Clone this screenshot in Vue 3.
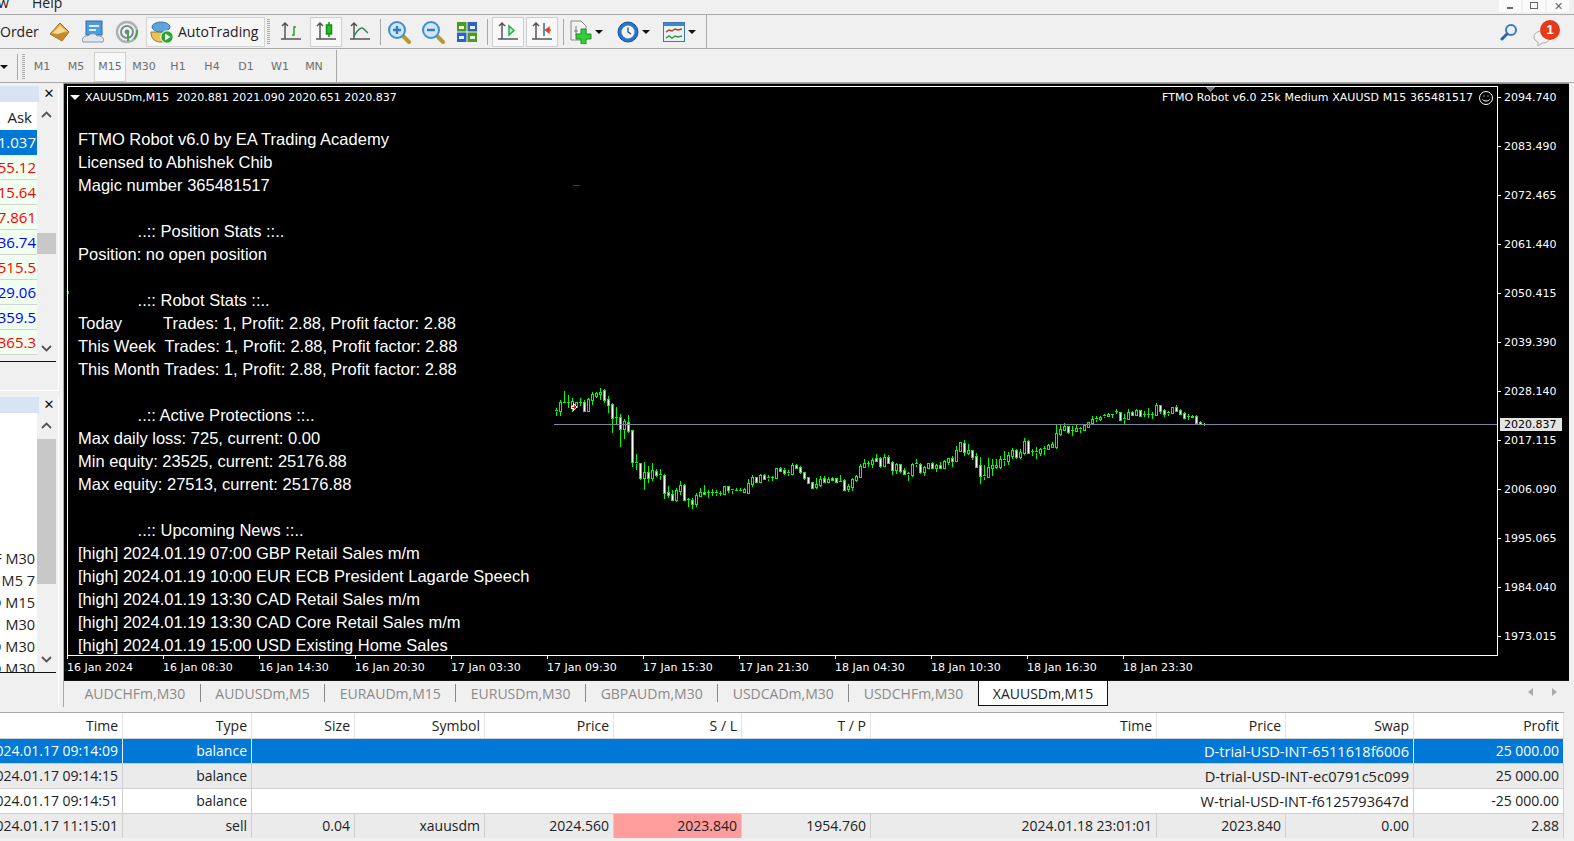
<script setup>
const periods = ['M1', 'M5', 'M15', 'M30', 'H1', 'H4', 'D1', 'W1', 'MN']

const quotes = [
  { text: '1.037', color: '#fff', active: true },
  { text: '55.12', color: '#f00' },
  { text: '15.64', color: '#f00' },
  { text: '7.861', color: '#f00' },
  { text: '36.74', color: '#00f' },
  { text: '515.5', color: '#f00' },
  { text: '29.06', color: '#00f' },
  { text: '359.5', color: '#00f' },
  { text: '365.3', color: '#f00' },
]

const navItems = ['F M30', 'D M5 7', 'D M15', 'M30', 'D M30', 'D M30']

const indent = '             '

const overlay = [
  'FTMO Robot v6.0 by EA Trading Academy',
  'Licensed to Abhishek Chib',
  'Magic number 365481517',
  '',
  indent + '..:: Position Stats ::..',
  'Position: no open position',
  '',
  indent + '..:: Robot Stats ::..',
  'Today         Trades: 1, Profit: 2.88, Profit factor: 2.88',
  'This Week  Trades: 1, Profit: 2.88, Profit factor: 2.88',
  'This Month Trades: 1, Profit: 2.88, Profit factor: 2.88',
  '',
  indent + '..:: Active Protections ::..',
  'Max daily loss: 725, current: 0.00',
  'Min equity: 23525, current: 25176.88',
  'Max equity: 27513, current: 25176.88',
  '',
  indent + '..:: Upcoming News ::..',
  '[high] 2024.01.19 07:00 GBP Retail Sales m/m',
  '[high] 2024.01.19 10:00 EUR ECB President Lagarde Speech',
  '[high] 2024.01.19 13:30 CAD Retail Sales m/m',
  '[high] 2024.01.19 13:30 CAD Core Retail Sales m/m',
  '[high] 2024.01.19 15:00 USD Existing Home Sales',
]

const symbolLine = 'XAUUSDm,M15  2020.881 2021.090 2020.651 2020.837'

const priceLabels = [
  ['2094.740', 97], ['2083.490', 146], ['2072.465', 195], ['2061.440', 244],
  ['2050.415', 293], ['2039.390', 342], ['2028.140', 391], ['2017.115', 440],
  ['2006.090', 489], ['1995.065', 538], ['1984.040', 587], ['1973.015', 636],
]

const timeLabels = [
  '16 Jan 2024', '16 Jan 08:30', '16 Jan 14:30', '16 Jan 20:30', '17 Jan 03:30', '17 Jan 09:30',
  '17 Jan 15:30', '17 Jan 21:30', '18 Jan 04:30', '18 Jan 10:30', '18 Jan 16:30', '18 Jan 23:30',
]

const tabs = ['AUDCHFm,M30', 'AUDUSDm,M5', 'EURAUDm,M15', 'EURUSDm,M30', 'GBPAUDm,M30', 'USDCADm,M30', 'USDCHFm,M30', 'XAUUSDm,M15']

const headers = ['Time', 'Type', 'Size', 'Symbol', 'Price', 'S / L', 'T / P', 'Time', 'Price', 'Swap', 'Profit']

const balanceRows = [
  { time: '2024.01.17 09:14:09', comment: 'D-trial-USD-INT-6511618f6006', profit: '25 000.00', cls: 'selected' },
  { time: '2024.01.17 09:14:15', comment: 'D-trial-USD-INT-ec0791c5c099', profit: '25 000.00', cls: 'odd' },
  { time: '2024.01.17 09:14:51', comment: 'W-trial-USD-INT-f6125793647d', profit: '-25 000.00', cls: '' },
]
const tradeRow = ['2024.01.17 11:15:01', 'sell', '0.04', 'xauusdm', '2024.560', '2023.840', '1954.760', '2024.01.18 23:01:01', '2023.840', '0.00', '2.88']

// high, body top, body bottom, low in zoomed pixels, kind: w filled, o hollow, t flat
const seriesA = `115,120,126,138,t 90,97,124,138,o 63,95,98,100,t 75,95,100,115,t 85,92,105,125,o 95,97,110,115,o 85,95,100,108,t 90,97,122,125,w 85,88,122,126,o 67,73,90,105,o 65,70,78,85,o 55,65,72,90,o 58,61,89,99,w 78,88,104,128,w 98,103,143,188,w 110,141,143,165,t 132,142,176,230,w 148,154,176,207,o 135,155,182,190,w 180,181,277,290,w 252,276,282,300,t 278,280,323,330,w 276,307,323,360,o 288,307,323,338,w 279,301,323,332,o 298,304,315,322,w 297,312,317,330,t 313,316,368,386,w 348,367,375,385,w 360,373,391,393,w 353,361,389,396,o 333,346,362,376,o 342,345,391,392,w 383,388,391,410,t 385,391,401,417,w 368,376,401,410,o 354,367,378,382,o 345,366,371,372,w 360,366,369,384,t 358,365,369,378,t 360,365,372,378,t 364,368,373,378,t 348,349,372,374,o 348,349,360,370,w 358,358,362,372,t 354,360,365,367,t 354,360,365,367,t 355,357,365,367,o 328,340,368,369,o 315,322,341,350,o 320,322,336,340,w 313,315,337,338,o 312,316,327,330,w 316,321,326,332,t 318,320,322,333,t 294,295,323,324,o 290,294,303,306,w 295,301,309,316,w 300,306,311,318,t 280,285,311,312,o 283,286,293,296,w 288,292,307,312,w 306,307,324,330,w 320,322,339,342,w 335,337,353,358,w 325,343,350,358,o 318,328,344,350,o 318,324,336,340,w 322,327,335,338,o 322,325,330,333,w 324,325,335,336,w 316,334,335,336,t 328,331,359,360,w 342,349,358,366,o 323,327,350,362,o 316,317,330,336,o 282,289,320,322,o 268,280,290,294,o 274,279,283,290,t 264,271,281,293,o 252,264,273,277,w`
const seriesB = `232,235,258,263,w 222,232,257,262,o 226,232,249,252,w 243,246,269,285,w 250,252,270,282,o 252,253,272,278,w 265,271,282,285,w 275,280,284,303,t 248,252,285,291,o 237,250,256,262,t 250,251,275,281,w 258,262,275,288,o 249,250,263,265,o 247,250,263,265,w 253,255,263,277,o 247,256,263,266,w 240,243,263,265,o 234,235,246,255,o 228,234,242,260,w 198,210,242,243,o 186,187,212,213,o 181,190,217,228,w 192,209,218,224,o 210,211,230,240,w 220,229,260,265,w 232,256,287,312,w 255,286,291,300,t 235,262,290,291,o 236,256,263,288,o 236,255,262,268,o 228,237,262,267,o 213,238,242,258,t 215,225,243,254,o 203,211,229,237,o 208,211,231,236,w 206,217,231,238,o 175,183,219,225,o 180,183,219,220,w 208,212,215,228,t 202,214,218,237,t 204,208,218,228,o 198,204,210,225,t 192,194,207,209,o 187,192,200,204,o 135,160,200,207,o 132,148,162,168,o 128,139,150,154,o 138,139,156,162,w 138,151,154,167,t 136,144,153,156,o 141,145,149,159,t 135,136,149,150,o 127,127,140,142,o 109,118,129,130,o 109,114,120,125,t 108,110,116,122,o 102,106,110,114,t 99,102,108,110,o 103,103,105,114,t 87,94,97,102,t 96,97,119,121,w 103,115,119,132,t 88,97,116,117,o 93,97,104,108,w 88,91,105,107,o 90,91,108,110,w 92,103,106,111,t 84,102,104,114,t 95,103,105,117,t 70,76,105,106,o 75,76,93,102,w 88,91,101,110,w 94,97,102,107,t 80,82,99,100,o 76,82,92,96,w 87,91,102,104,w 97,99,113,116,w 102,107,111,120,t 106,107,110,114,w 106,107,129,130,w 124,125,133,135,w 129,133,134,138,t`

const parseSeries = (raw, x0, y0) =>
  raw.split(' ').map((item, i) => {
    const p = item.split(',')
    const ys = p.slice(0, 4).map((v) => Math.round(y0 + Number(v) / 3))
    return {
      x: x0 + i * 4,
      high: ys[0],
      top: ys[1],
      bottom: Math.max(ys[2], ys[1] + 1),
      low: ys[3],
      kind: p[4],
    }
  })

const candles = [...parseSeries(seriesA, 556, 370), ...parseSeries(seriesB, 880, 380)]
</script>

<template>
  <div class="terminal">
    <div class="menubar">
      <span class="menu-item first">w</span>
      <span class="menu-item">Help</span>
      <div class="window-btns">
        <span class="win-btn"><i class="win-min"></i></span>
        <span class="win-btn"><i class="win-restore"></i></span>
        <span class="win-btn close">✕</span>
      </div>
    </div>

    <div class="toolbar main-bar">
      <div class="tool-group">
        <span class="order-label">Order</span>
        <span class="tool w34">
          <svg width="24" height="22" viewBox="0 0 24 22">
            <path d="M3 13 13 2l9 9-7 9z" fill="#e3b04a" stroke="#94691c" />
            <path d="M3 13l12 7 7-9-9 1z" fill="#c48a2a" />
            <path d="M6 12l7-7 6 5-8 3z" fill="#f6dc97" />
          </svg>
        </span>
        <span class="tool w34">
          <svg width="24" height="24" viewBox="0 0 24 24">
            <rect x="5" y="1" width="16" height="14" fill="#4f9bdc" stroke="#2a6cae" />
            <rect x="8" y="5" width="10" height="2" fill="#dcecf9" />
            <rect x="8" y="9" width="7" height="2" fill="#dcecf9" />
            <path d="M2 22c-2-4 2-7 5-6 2-3 8-3 9 0 4-1 8 2 6 6z" fill="#dfe6ee" stroke="#8a97a8" />
          </svg>
        </span>
        <span class="tool w34">
          <svg width="24" height="24" viewBox="0 0 24 24" fill="none">
            <circle cx="12" cy="12" r="10" stroke="#aab2b5" stroke-width="2.400" />
            <circle cx="12" cy="12" r="6" stroke="#7f8a8d" stroke-width="2" />
            <circle cx="12" cy="12" r="2.400" fill="#5f8f7a" />
            <path d="M19 19c3-3 3-7 3-9" stroke="#4ca05a" stroke-width="2" />
            <path d="M13 12v9" stroke="#4ca05a" stroke-width="2" />
          </svg>
        </span>
        <div class="autotrading">
          <svg width="24" height="24" viewBox="0 0 24 24">
            <path d="M1 12c0 6 3 10 10 10s9-4 9-10z" fill="#eac25a" stroke="#9a7b2a" />
            <ellipse cx="11" cy="7" rx="9" ry="5" fill="#5da5d8" stroke="#3679ad" />
            <circle cx="17" cy="17" r="6.200" fill="#2aa52e" stroke="#fff" />
            <path d="M15 13.500v7l5.500-3.500z" fill="#fff" />
          </svg>
          <span>AutoTrading</span>
        </div>
      </div>

      <i class="grip first-grip"></i>

      <span class="tool w34">
        <svg width="24" height="22" viewBox="0 0 24 22" fill="none" stroke="#555" stroke-width="1.500">
          <path d="M6 2v16M2 18h20M3 5l3-3 3 3" />
          <path d="M13 14h2V6h2" stroke="#2ca02c" />
        </svg>
      </span>
      <span class="tool boxed candle-btn">
        <svg width="24" height="22" viewBox="0 0 24 22" fill="none" stroke="#555" stroke-width="1.500">
          <path d="M6 2v16M2 18h20M3 5l3-3 3 3" />
          <path d="M15 1v15" stroke="#1a8a1a" />
          <rect x="12.500" y="4" width="5" height="9" fill="#22c022" stroke="#1a8a1a" />
        </svg>
      </span>
      <span class="tool w34">
        <svg width="24" height="22" viewBox="0 0 24 22" fill="none" stroke="#555" stroke-width="1.500">
          <path d="M6 2v16M2 18h20M3 5l3-3 3 3" />
          <path d="M6 15c3-5 5-8 8-8 2 0 3 3 6 5" stroke="#2c8a5c" />
        </svg>
      </span>
      <i class="sep"></i>
      <span class="tool w34 zoom-in">
        <svg width="24" height="24" viewBox="0 0 24 24">
          <path d="M15 15l7 7" stroke="#b79a34" stroke-width="4" stroke-linecap="round" />
          <circle cx="10" cy="10" r="8" fill="#cfe6f7" stroke="#3f8fd0" stroke-width="2" />
          <path d="M6 10h8M10 6v8" stroke="#2e7fc2" stroke-width="2.400" />
        </svg>
      </span>
      <span class="tool w34">
        <svg width="24" height="24" viewBox="0 0 24 24">
          <path d="M15 15l7 7" stroke="#b79a34" stroke-width="4" stroke-linecap="round" />
          <circle cx="10" cy="10" r="8" fill="#cfe6f7" stroke="#3f8fd0" stroke-width="2" />
          <path d="M6 10h8" stroke="#2e7fc2" stroke-width="2.400" />
        </svg>
      </span>
      <span class="tool w34">
        <svg width="22" height="22" viewBox="0 0 22 22">
          <rect x="1" y="1" width="9.500" height="9.500" fill="#4c9a1e" />
          <rect x="11.500" y="1" width="9.500" height="9.500" fill="#2c62c4" />
          <rect x="1" y="11.500" width="9.500" height="9.500" fill="#2c62c4" />
          <rect x="11.500" y="11.500" width="9.500" height="9.500" fill="#4c9a1e" />
          <path d="M3 5h5v3H3zM14 5h5v3h-5zM3 15h5v3H3zM14 15h5v3h-5z" fill="#e8f2e0" />
        </svg>
      </span>
      <i class="sep"></i>
      <span class="tool boxed scroll-btn">
        <svg width="24" height="22" viewBox="0 0 24 22" fill="none" stroke="#555" stroke-width="1.500">
          <path d="M6 2v16M2 18h20M3 5l3-3 3 3" />
          <path d="M13 5v9l5-4.500z" stroke="#22b04a" fill="#c6efcf" />
        </svg>
      </span>
      <span class="tool boxed shift-btn">
        <svg width="24" height="22" viewBox="0 0 24 22" fill="none" stroke="#555" stroke-width="1.500">
          <path d="M6 2v16M2 18h20M3 5l3-3 3 3" />
          <path d="M14 2v13" stroke="#2a6cae" />
          <path d="M21 9h-3M19 6.500l-3.500 2.500 3.500 2.500z" stroke="#d84a20" fill="#d84a20" />
        </svg>
      </span>
      <i class="sep"></i>
      <span class="tool w28">
        <svg width="24" height="24" viewBox="0 0 24 24">
          <path d="M2 1h10l5 5v14H2z" fill="#f2f2f2" stroke="#888" />
          <path d="M7 6v9M5 11h4" stroke="#777" fill="none" />
          <path d="M12 9h5v5h5v5h-5v5h-5v-5H7v-5h5z" fill="#31d03a" stroke="#1e8f26" />
        </svg>
      </span>
      <i class="caret"></i>
      <span class="tool w28 clock-btn">
        <svg width="22" height="22" viewBox="0 0 22 22">
          <circle cx="11" cy="11" r="10" fill="#2576cc" stroke="#144f94" />
          <circle cx="11" cy="11" r="6.500" fill="#f0f4f7" />
          <path d="M11 6.500V11l3 2" stroke="#444" stroke-width="1.300" fill="none" />
        </svg>
      </span>
      <i class="caret"></i>
      <span class="tool w28 template-btn">
        <svg width="22" height="20" viewBox="0 0 22 20">
          <rect x="0.500" y="0.500" width="21" height="19" fill="#e9f0f7" stroke="#3e78b8" />
          <rect x="1" y="1" width="20" height="3" fill="#3e86cc" />
          <path d="M3 10l3-2 3 1 3-2 3 1 4-1" stroke="#b04020" stroke-width="1.500" fill="none" />
          <path d="M3 16l3-2 3 2 3-2 3 1 4-1" stroke="#3c9a3c" stroke-width="1.500" fill="none" />
        </svg>
      </span>
      <i class="caret"></i>
      <i class="end-line"></i>

      <div class="right-tools">
        <svg class="search-icon" width="18" height="18" viewBox="0 0 18 18" fill="none">
          <circle cx="11" cy="7" r="5" fill="#eaf3fb" stroke="#3c78c0" stroke-width="2" />
          <path d="M7 11l-5 5" stroke="#2f62ae" stroke-width="3" stroke-linecap="round" />
        </svg>
        <div class="alerts">
          <svg width="22" height="18" viewBox="0 0 22 18">
            <path d="M2 8c0-4 4-6 8-6s8 2 8 6-4 6-8 6l-4 3v-4c-2-1-4-2-4-5z" fill="#f2f2f2" stroke="#a8a8a8" />
          </svg>
          <span class="alert-badge">1</span>
        </div>
      </div>
    </div>

    <div class="toolbar period-bar">
      <i class="caret small"></i>
      <i class="sep first-sep"></i>
      <i class="grip"></i>
      <span v-for="p in periods" :key="p" class="period" :class="{ current: p === 'M15' }">{{ p }}</span>
      <i class="sep end-sep"></i>
    </div>

    <div class="workspace">
      <aside class="side">
        <section class="panel watch">
          <div class="panel-title"><i class="title-fill"></i><span class="close-x">✕</span></div>
          <div class="panel-body">
            <div class="list">
              <div class="watch-head">Ask</div>
              <div
                v-for="q in quotes"
                :key="q.text"
                class="watch-row"
                :class="{ active: q.active }"
                :style="{ color: q.color }"
              >
                {{ q.text }}
              </div>
            </div>
            <div class="scrollbar">
              <svg class="chev" width="11" height="7" viewBox="0 0 11 7"><path d="M1 6l4.500-4.500L10 6" /></svg>
              <i class="thumb watch-thumb"></i>
              <svg class="chev down" width="11" height="7" viewBox="0 0 11 7"><path d="M1 6l4.500-4.500L10 6" /></svg>
            </div>
          </div>
          <div class="panel-foot"></div>
        </section>
        <section class="panel navigator">
          <div class="panel-title"><i class="title-fill"></i><span class="close-x">✕</span></div>
          <div class="panel-body">
            <div class="list nav-list">
              <div v-for="(n, i) in navItems" :key="i" class="nav-row">{{ n }}</div>
            </div>
            <div class="scrollbar">
              <svg class="chev" width="11" height="7" viewBox="0 0 11 7"><path d="M1 6l4.500-4.500L10 6" /></svg>
              <i class="thumb nav-thumb"></i>
              <svg class="chev down" width="11" height="7" viewBox="0 0 11 7"><path d="M1 6l4.500-4.500L10 6" /></svg>
            </div>
          </div>
          <div class="panel-foot"></div>
        </section>
      </aside>

      <main class="chart-col">
        <div class="chart">
          <svg class="candles" width="1510" height="600" viewBox="64 83 1510 600">
            <g v-for="c in candles" :key="c.x">
              <path
                :d="`M${c.x + 0.5} ${c.high}V${c.top}M${c.x + 0.5} ${c.bottom}V${c.low}`"
                stroke="#00ff00"
                fill="none"
              />
              <path
                v-if="c.kind === 't'"
                :d="`M${c.x - 1} ${c.top + 0.5}H${c.x + 2}`"
                stroke="#00ff00"
              />
              <rect
                v-else
                :x="c.x - 0.5"
                :y="c.top + 0.5"
                width="2"
                :height="c.bottom - c.top"
                :fill="c.kind === 'w' ? '#fff' : '#000'"
                stroke="#00ff00"
              />
            </g>
            <path d="M554 424.500H1498" stroke="#77889a" stroke-width="1" />
            <path d="M571 406h2v-3l4 4-4 4v-3h-2z" fill="#f00" stroke="#fff" />
            <path d="M573 185.500h7" stroke="#c00" />
            <path d="M68 290.500v3" stroke="#0c0" />
            <path d="M1205 87h10l-5 5z" fill="#777" />
          </svg>

          <div class="plot-frame"></div>

          <div class="symbol-line">
            <i class="tri"></i>
            <span>{{ symbolLine }}</span>
          </div>
          <div class="robot-line">
            FTMO Robot v6.0 25k Medium XAUUSD M15 365481517
            <svg width="16" height="16" viewBox="0 0 16 16" fill="none" stroke="#fff">
              <circle cx="8" cy="8" r="6.500" />
              <path d="M4.500 9.500c1 2 6 2 7 0M6 5.500v1M10 5.500v1" />
            </svg>
          </div>

          <div class="overlay-text">
            <div v-for="(line, i) in overlay" :key="i" class="overlay-line">{{ line }}</div>
          </div>

          <div
            v-for="p in priceLabels"
            :key="p[0]"
            class="price-label"
            :style="{ top: p[1] - 90 + 'px' }"
          >
            {{ p[0] }}
          </div>
          <div class="price-now">2020.837</div>

          <div class="time-axis">
            <span v-for="t in timeLabels" :key="t" class="time-label">{{ t }}</span>
          </div>
        </div>

        <div class="tabs">
          <span
            v-for="t in tabs"
            :key="t"
            class="tab"
            :class="{ on: t === 'XAUUSDm,M15' }"
          >{{ t }}</span>
          <span class="tab-arrows"><i class="arrow-l"></i><i class="arrow-r"></i></span>
        </div>
      </main>
    </div>

    <div class="history">
      <div class="grid head">
        <div v-for="(h, i) in headers" :key="i" class="cell">{{ h }}</div>
      </div>
      <div v-for="r in balanceRows" :key="r.time" class="grid row" :class="r.cls">
        <div class="cell">{{ r.time }}</div>
        <div class="cell">balance</div>
        <div class="cell comment">{{ r.comment }}</div>
        <div class="cell">{{ r.profit }}</div>
      </div>
      <div class="grid row odd">
        <div
          v-for="(v, i) in tradeRow"
          :key="i"
          class="cell"
          :class="{ hit: i === 5 }"
        >
          {{ v }}
        </div>
      </div>
    </div>
  </div>
</template>

<style>
html,
body {
  margin: 0;
  background: #f0f0f0;
}
</style>

<style scoped>
.terminal {
  width: 1574px;
  height: 841px;
  overflow: hidden;
  background: #f0f0f0;
  font-family: "Open Sans", "Noto Sans", sans-serif;
  color: #222;
}

.menubar {
  height: 14px;
  border-bottom: 1px solid #a8a8a8;
  display: flex;
  align-items: flex-end;
  overflow: hidden;
  font-size: 14px;
  line-height: 14px;
  position: relative;
}

.menu-item {
  position: relative;
  top: -4px;
  margin-left: 26px;
}

.menu-item.first {
  margin-left: -2px;
  width: 8px;
}

.window-btns {
  position: absolute;
  right: 5px;
  top: 0;
  display: flex;
  gap: 2px;
}

.win-btn {
  width: 22px;
  height: 12px;
  background: #fbfbfb;
  display: flex;
  justify-content: center;
  align-items: center;
  font-size: 11px;
  color: #666;
}

.win-min {
  width: 6px;
  height: 2px;
  background: #666;
  margin-top: 4px;
}

.win-restore {
  width: 6px;
  height: 5px;
  border: 1px solid #666;
  margin-top: -1px;
}

.toolbar {
  display: flex;
  align-items: center;
  border-bottom: 1px solid #a8a8a8;
  box-sizing: border-box;
}

.main-bar {
  height: 34px;
  position: relative;
}

.tool-group {
  display: flex;
  align-items: center;
}

.order-label {
  font-size: 14px;
  width: 42px;
}

.tool {
  display: flex;
  align-items: center;
  justify-content: center;
  flex: none;
  height: 30px;
  box-sizing: border-box;
}

.w34 {
  width: 34px;
}

.w28 {
  width: 28px;
}

.boxed {
  border: 1px solid #cfcfcf;
  background: #f8f8f8;
  width: 32px;
}

.candle-btn {
  margin: 0 1px 0 2px;
}

.zoom-in {
  margin-left: -2px;
}

.scroll-btn {
  margin: 0 2px 0 1px;
}

.shift-btn {
  margin-right: 2px;
}

.clock-btn {
  margin-left: 11px;
}

.template-btn {
  margin-left: 10px;
}

.autotrading {
  width: 119px;
  height: 30px;
  margin-left: 2px;
  box-sizing: border-box;
  border: 1px solid #d4d4d4;
  background: #f6f6f6;
  display: flex;
  align-items: center;
  gap: 4px;
  padding-left: 3px;
  font-size: 14px;
}

.grip {
  flex: none;
  width: 3px;
  height: 26px;
  margin: 0 1px 0 2px;
  background: repeating-linear-gradient(#aaa 0 1px, transparent 1px 2px);
}

.first-grip {
  margin: 0 4px 0 2px;
}

.sep {
  flex: none;
  width: 1px;
  height: 26px;
  background: #a8a8a8;
  margin: 0 3px;
}

.end-sep {
  margin-left: 4px;
  height: 33px;
}

.caret {
  flex: none;
  width: 0;
  height: 0;
  border: 4px solid transparent;
  border-top: 4px solid #111;
  border-bottom: 0;
}

.end-line {
  width: 1px;
  height: 33px;
  margin-left: 10px;
  background: #a8a8a8;
}

.right-tools {
  position: absolute;
  top: 0;
  right: 0;
}

.search-icon {
  position: absolute;
  top: 8px;
  right: 56px;
}

.alerts {
  position: absolute;
  top: 2px;
  right: 14px;
  width: 38px;
  height: 30px;
}

.alerts svg {
  position: absolute;
  left: 10px;
  top: 12px;
}

.alert-badge {
  position: absolute;
  right: 0;
  top: 3px;
  width: 20px;
  height: 20px;
  border-radius: 50%;
  background: #e33a1c;
  color: #fff;
  font: 700 13px/20px "Liberation Sans", sans-serif;
  text-align: center;
}

.period-bar {
  height: 34px;
  padding-top: 2px;
}

.period-bar .caret.small {
  border-width: 4px;
  border-bottom: 0;
  margin-right: 4px;
}

.first-sep {
  margin: 0 2px 0 5px;
}

.period {
  width: 32px;
  margin-right: 2px;
  height: 30px;
  box-sizing: border-box;
  display: flex;
  align-items: center;
  justify-content: center;
  color: #6e6e6e;
  font-family: "DejaVu Sans", sans-serif;
  font-size: 11px;
}

.period.current {
  border: 1px solid #cfcfcf;
  background: #f8f8f8;
}

.workspace {
  display: flex;
  height: 624px;
}

.side {
  width: 64px;
  flex: none;
  border-right: 1px solid #a8a8a8;
  box-sizing: border-box;
  display: flex;
  flex-direction: column;
}

.panel {
  width: 59px;
  background: #f0f0f0;
  border-right: 1px solid #fff;
  box-sizing: border-box;
  overflow: hidden;
}

.watch {
  margin-top: 3px;
  height: 305px;
  border-bottom: 1px solid #fff;
}

.navigator {
  margin-top: 6px;
  height: 310px;
}

.panel-title {
  height: 16px;
  display: flex;
  justify-content: space-between;
  align-items: center;
}

.title-fill {
  width: 39px;
  height: 16px;
  background: #d6e4f3;
}

.close-x {
  width: 18px;
  text-align: center;
  font: 700 13px/16px "DejaVu Sans", sans-serif;
  color: #111;
}

.panel-body {
  display: flex;
  background: #f0f0f0;
}

.list {
  width: 37px;
  height: 259px;
  overflow: hidden;
  flex: none;
}

.scrollbar {
  width: 19px;
  height: 259px;
  background: #f0f0f0;
  position: relative;
  flex: none;
}

.chev {
  position: absolute;
  top: 9px;
  left: 4px;
  fill: none;
  stroke: #555;
  stroke-width: 1.800;
}

.chev.down {
  top: auto;
  bottom: 9px;
  transform: rotate(180deg);
}

.thumb {
  position: absolute;
  left: 0;
  width: 19px;
  background: #c8c8c8;
}

.watch-thumb {
  top: 131px;
  height: 21px;
}

.nav-thumb {
  top: 26px;
  height: 145px;
}

.panel-foot {
  border-top: 1px solid #111;
  margin-right: 2px;
}

.watch-head {
  height: 28px;
  background: #fff;
  text-align: right;
  line-height: 30px;
  padding-right: 5px;
  font-size: 15px;
}

.watch-row {
  height: 25px;
  box-sizing: border-box;
  background: #f0fff0;
  border-bottom: 1px solid #d4d4d4;
  line-height: 24px;
  white-space: nowrap;
  font-size: 15px;
  display: flex;
  justify-content: flex-end;
  padding-right: 1px;
}

.watch-row.active {
  background: #0078d7;
  border-bottom: 0;
}

.nav-list {
  background: #fff;
  padding-top: 135px;
  box-sizing: border-box;
}

.nav-row {
  height: 22px;
  line-height: 22px;
  white-space: nowrap;
  display: flex;
  justify-content: flex-end;
  font-size: 14.500px;
  padding-right: 2px;
}

.chart-col {
  flex: 1;
  min-width: 0;
  display: flex;
  flex-direction: column;
}

.chart {
  position: relative;
  height: 597px;
  width: 1505px;
  background: #000;
  border-top: 1px solid #888;
  box-sizing: border-box;
  overflow: hidden;
  color: #fff;
}

.candles {
  position: absolute;
  left: 0;
  top: -1px;
  shape-rendering: crispEdges;
}

.plot-frame {
  position: absolute;
  left: 3px;
  top: 2px;
  width: 1431px;
  height: 570px;
  box-sizing: border-box;
  border: 1px solid #fff;
  pointer-events: none;
}

.symbol-line {
  position: absolute;
  left: 6px;
  top: 6px;
  white-space: pre;
  font: 11px/15px "DejaVu Sans", sans-serif;
  display: flex;
  align-items: center;
  gap: 5px;
}

.tri {
  width: 0;
  height: 0;
  border: 5px solid transparent;
  border-top: 5px solid #fff;
  border-bottom: 0;
}

.robot-line {
  position: absolute;
  right: 75px;
  top: 6px;
  white-space: nowrap;
  font: 11px/16px "DejaVu Sans", sans-serif;
  word-spacing: 0.300px;
  display: flex;
  align-items: center;
  gap: 5px;
}

.overlay-text {
  position: absolute;
  left: 14px;
  top: 44px;
  font: 16.500px/23px "Liberation Sans", Arial, sans-serif;
  height: 528px;
  overflow: hidden;
}

.overlay-line {
  height: 23px;
  white-space: pre;
}

.price-label {
  position: absolute;
  left: 1440px;
  font: 11px/13px "DejaVu Sans", sans-serif;
  display: flex;
  align-items: center;
}

.price-label::before {
  content: "";
  position: absolute;
  left: -6px;
  top: 6px;
  width: 3px;
  height: 1px;
  background: #fff;
}

.price-now {
  position: absolute;
  left: 1436px;
  top: 334px;
  width: 62px;
  height: 13px;
  background: #e4e4e4;
  color: #000;
  font: 11px/14px "DejaVu Sans", sans-serif;
  padding-left: 4px;
  box-sizing: border-box;
}

.time-axis {
  position: absolute;
  left: 3px;
  top: 577px;
  display: flex;
  font: 11px/14px "DejaVu Sans", sans-serif;
}

.time-label {
  width: 96px;
  flex: none;
  white-space: nowrap;
  position: relative;
}

.time-label::before {
  content: "";
  position: absolute;
  left: 0;
  top: -5px;
  width: 1px;
  height: 3px;
  background: #fff;
}

.tabs {
  height: 25px;
  width: 1505px;
  border-top: 1px solid #111;
  display: flex;
  align-items: center;
  font-size: 14px;
  color: #8a8a8a;
  padding-left: 6px;
  position: relative;
  box-sizing: border-box;
}

.tab {
  height: 18px;
  line-height: 19px;
  padding: 0 14.500px;
  border-right: 1px solid #888;
  white-space: nowrap;
}

.tab.on {
  height: 25px;
  line-height: 25px;
  padding: 0 14px;
  background: #fff;
  color: #222;
  border: 1px solid #111;
  border-top: 0;
  box-sizing: border-box;
  margin-left: -1px;
  align-self: flex-start;
}

.tab-arrows {
  position: absolute;
  right: 12px;
  top: 7px;
  display: flex;
  gap: 19px;
}

.arrow-l,
.arrow-r {
  width: 0;
  height: 0;
  border: 4px solid transparent;
  border-left: 0;
  border-right: 5px solid #aaa;
}

.arrow-r {
  border-right: 0;
  border-left: 5px solid #aaa;
}

.history {
  margin-top: 5px;
  width: 1564px;
  background: #fff;
  font-size: 14px;
  border-top: 1px solid #a8a8a8;
}

.grid {
  display: grid;
  grid-template-columns: 123px 129px 103px 130px 129px 128px 129px 286px 129px 128px 150px;
}

.cell {
  box-sizing: border-box;
  display: flex;
  justify-content: flex-end;
  padding-right: 4px;
  border-right: 1px solid #cfcfcf;
  white-space: nowrap;
  overflow: hidden;
}

.head .cell {
  height: 25px;
  line-height: 26px;
  border-right-color: #e4e4e4;
}

.row {
  height: 25px;
  line-height: 24px;
  box-sizing: border-box;
  border-top: 1px solid #cfcfcf;
}

.row.selected {
  background: #0078d7;
  color: #fff;
}

.row.selected .cell {
  border-right-color: #e8f2fb;
}

.row.odd {
  background: #ebebeb;
}

.comment {
  grid-column: 3 / span 8;
  font-size: 14.600px;
}

.hit {
  background: #ff9c9c;
}
</style>
